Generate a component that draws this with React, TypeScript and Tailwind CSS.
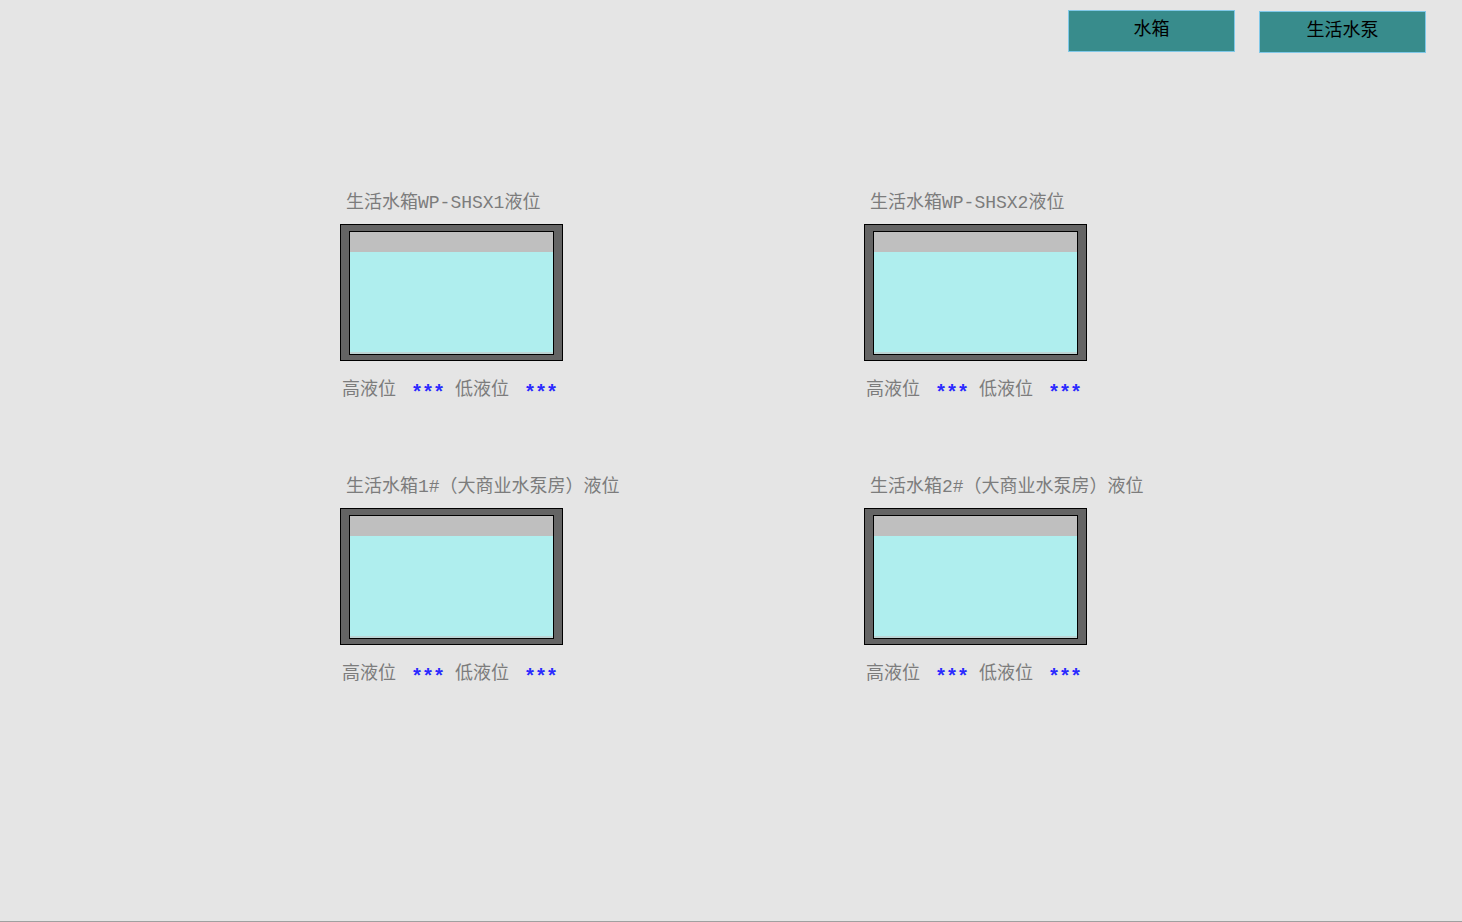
const tanks = [
  { name: "生活水箱WP-SHSX1液位" },
  { name: "生活水箱WP-SHSX2液位" },
  { name: "生活水箱1#（大商业水泵房）液位" },
  { name: "生活水箱2#（大商业水泵房）液位" },
]

const font = "font-['Liberation_Mono','Noto_Sans_CJK_SC',monospace]"

const Tank = () => {
  return (
    <div className="w-[223px] h-[137px] border border-black bg-[#646464] pt-[6px] pr-[8px] pb-[5px] pl-[8px]">
      <div className="h-full border border-black flex flex-col">
        <div className="h-[20px] bg-[#bfbfbf]" />
        <div className="flex-1 bg-[#afeeee]" />
        <div className="h-[2px] bg-[#bcd4d4]" />
      </div>
    </div>
  )
}

const Stars = () => (
  <span className="w-[30px] text-[#2a2aff] text-[20px] font-bold tracking-[-1px] translate-y-[4px]">***</span>
)

const TankPanel = ({ name }: { name: string }) => {
  return (
    <div className="flex flex-col">
      <div className="pl-[6px] pt-[2px] h-[24px] leading-[22px] text-[18px] text-[#7c7c7c] whitespace-nowrap">
        {name}
      </div>
      <div className="mt-[10px]">
        <Tank />
      </div>
      <div className="mt-[18px] pl-[2px] h-[22px] leading-[22px] flex items-center gap-[14px] text-[18px] whitespace-nowrap">
        <span className="w-[55px] text-[#7c7c7c]">高液位</span>
        <Stars />
        <span className="w-[55px] text-[#7c7c7c]">低液位</span>
        <Stars />
      </div>
    </div>
  )
}

export default function App() {
  return (
    <div className={`h-[922px] bg-[#e5e5e5] border-b border-[#a0a0a0] flex flex-col ${font}`}>
      <div className="flex justify-end items-start gap-[24px] pr-[36px] pt-[10px]">
        <button className="w-[167px] h-[42px] pb-[8px] bg-[#388c8c] border border-[#80c8e8] text-[18px] text-black font-['Noto_Sans_CJK_SC',sans-serif]">
          水箱
        </button>
        <button className="mt-[1px] w-[167px] h-[42px] pb-[8px] bg-[#388c8c] border border-[#80c8e8] text-[18px] text-black font-['Noto_Sans_CJK_SC',sans-serif]">
          生活水泵
        </button>
      </div>

      <div className="grid grid-cols-[524px_524px] gap-y-[73px] pl-[340px] mt-[137px]">
        {tanks.map((t) => (
          <TankPanel key={t.name} name={t.name} />
        ))}
      </div>
    </div>
  )
}
